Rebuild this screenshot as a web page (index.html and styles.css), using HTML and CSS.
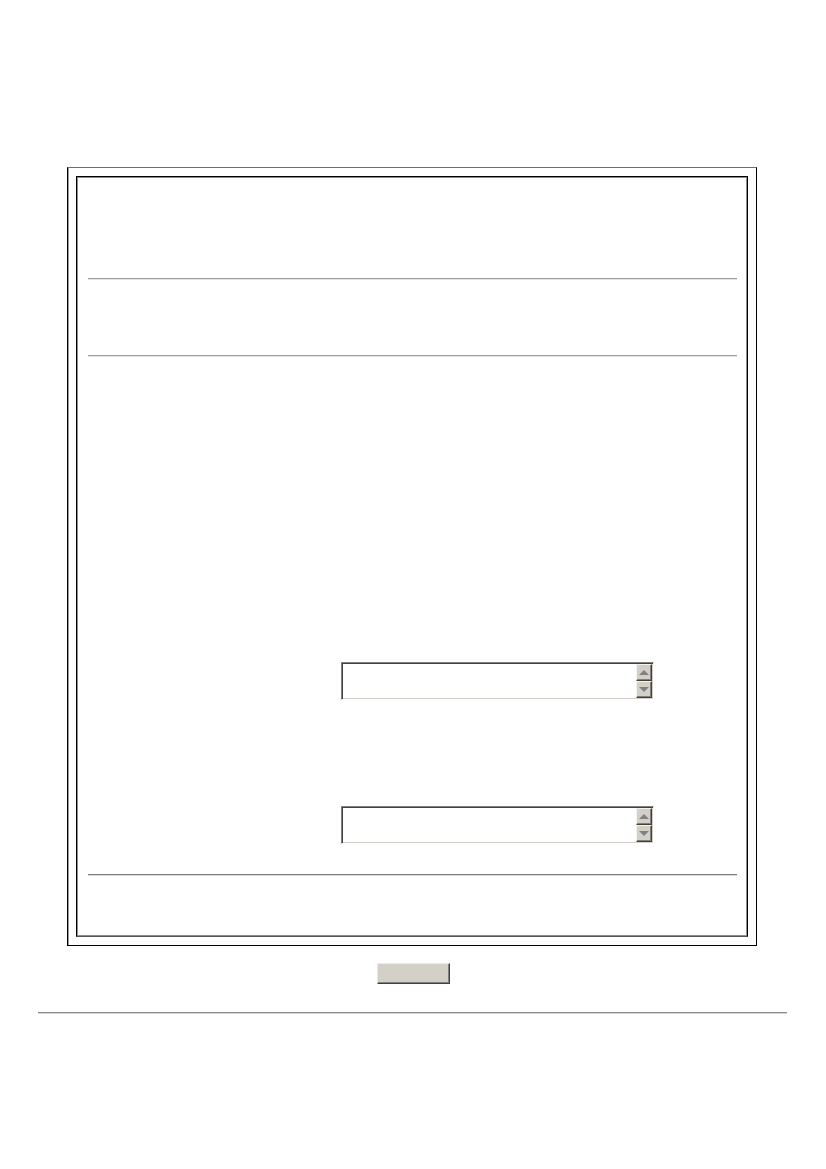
FILE: index.html
```html
<!DOCTYPE html>
<html>
<head>
    <title>Form</title>
    <link rel="stylesheet" href="styles.css">
</head>
<body>
    <!-- Outer framed table -->
    <div class="outer">
        <div class="inner">
            <div class="head"></div>
            <div class="rule"></div>
            <div class="sub"></div>
            <div class="rule"></div>

            <div class="form">
                <div class="row first">
                    <div class="field">
                        <div class="text"></div>
                        <div class="scroll">
                            <div class="arrow up"></div>
                            <div class="arrow down"></div>
                        </div>
                    </div>
                </div>
                <div class="row second">
                    <div class="field">
                        <div class="text"></div>
                        <div class="scroll">
                            <div class="arrow up"></div>
                            <div class="arrow down"></div>
                        </div>
                    </div>
                </div>
            </div>

            <div class="rule dark"></div>
            <div class="foot"></div>
        </div>
    </div>

    <div class="actions">
        <button class="btn" type="button"></button>
    </div>

    <div class="bottom-rule"></div>
</body>
</html>
```

FILE: styles.css
```css
body {
    margin: 8px;
    font-family: "Liberation Sans", Arial, sans-serif;
    background-color: #fff;
}

.outer {
    width: 690px;
    box-sizing: border-box;
    margin: 159px 0 0 59px;
    padding: 8px;
    border: 1px solid #000;
    border-top-color: #707070;
    box-shadow: inset 1px 0 0 #9a9a9a;
}

.inner {
    border: 1px solid #000;
    border-bottom-color: #555;
    box-shadow: inset 1px 1px 0 #8c8c8c, inset -1px -1px 0 #8c8c8c;
}

.head {
    height: 101px;
}

.sub {
    height: 75px;
}

.rule {
    margin: 0 10px 0 11px;
    border-top: 1px solid #a0a0a0;
    border-bottom: 1px solid #e2e2e2;
}

.rule.dark {
    border-top-color: #7c7c7c;
    border-bottom-color: #d8d8d8;
}

.form {
    height: 517px;
    display: flex;
    flex-direction: column;
}

.row {
    padding-left: 264px;
}

.row.first {
    margin-top: 305px;
}

.row.second {
    margin-top: 106px;
}

.field {
    width: 313px;
    height: 38px;
    box-sizing: border-box;
    display: flex;
    border: 1px solid;
    border-color: #808080 #fff #fff #808080;
    box-shadow: inset 1px 1px 0 #404040, inset -1px -1px 0 #d4d0c8;
    padding: 1px;
}

.text {
    flex: 1;
    background: #fff;
}

.scroll {
    width: 16px;
    display: flex;
    flex-direction: column;
}

.arrow {
    flex: 1;
    box-sizing: border-box;
    background: #d4d0c8;
    border: 1px solid;
    border-color: #f4f3f0 #404040 #404040 #f4f3f0;
    box-shadow: inset -1px -1px 0 #808080;
    display: flex;
    align-items: center;
    justify-content: center;
}

.arrow::after {
    content: "";
    width: 0;
    height: 0;
    border-left: 5px solid transparent;
    border-right: 5px solid transparent;
}

.arrow.up::after {
    border-bottom: 5px solid #808080;
}

.arrow.down::after {
    border-top: 5px solid #808080;
}

.foot {
    height: 60px;
}

.actions {
    text-align: center;
    margin-top: 17px;
    line-height: 0;
}

.btn {
    width: 73px;
    height: 21px;
    padding: 0;
    background-color: #d4d0c8;
    border: 1px solid;
    border-color: #eceae6 #404040 #404040 #eceae6;
    box-shadow: inset -1px -1px 0 #808080;
    cursor: pointer;
}

.bottom-rule {
    margin: 28px 31px 0 30px;
    border-top: 1px solid #8a8a8a;
    border-bottom: 1px solid #d6d6d6;
}
```
